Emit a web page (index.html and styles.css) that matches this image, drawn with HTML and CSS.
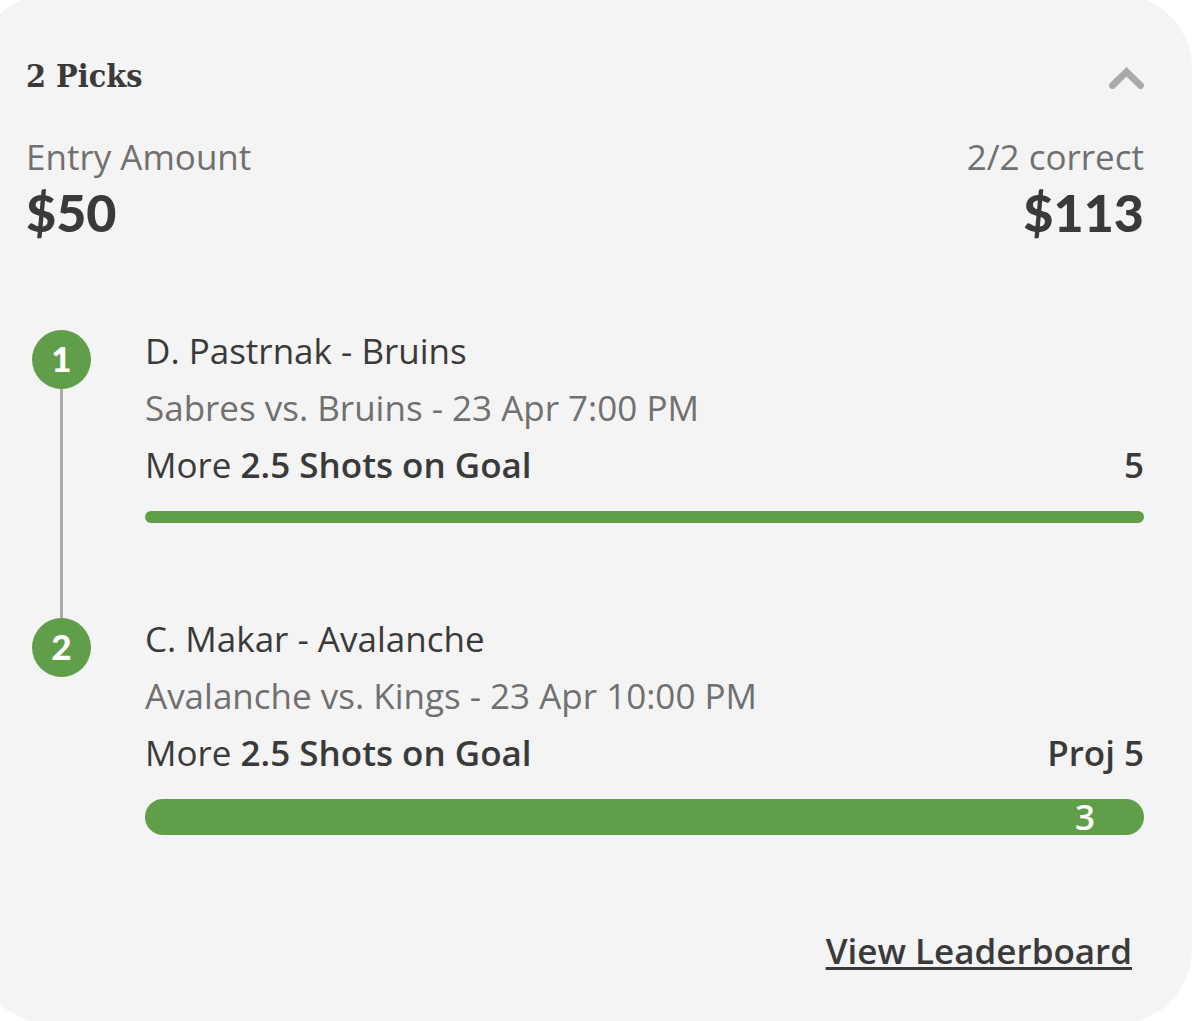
FILE: index.html
```
<!DOCTYPE html>
<html lang="en">
<head>
    <meta charset="UTF-8">
    <meta name="viewport" content="width=device-width, initial-scale=1">
    <title>2 Picks</title>
    <link rel="stylesheet" href="styles.css">
</head>
<body>
<div class="card">
    <div class="header">
        <h1>2 Picks</h1>
        <button class="toggle" type="button" aria-label="Hide picks" aria-expanded="true">
            <svg width="35" height="24" viewBox="0 0 35 24">
                <path d="M3.5 20.5L17.5 6.8L31.5 20.5" fill="none" stroke="#a9a9a9" stroke-width="6.8" stroke-linecap="round"/>
            </svg>
        </button>
    </div>

    <div class="summary">
        <div>
            <p class="label">Entry Amount</p>
            <p class="amount">$50</p>
        </div>
        <div class="right">
            <p class="label">2/2 correct</p>
            <p class="amount">$113</p>
        </div>
    </div>

    <ol class="picks">
        <li class="pick">
            <div class="marker">
                <span class="number">1</span>
                <span class="line"></span>
            </div>
            <div class="info">
                <p>D. Pastrnak - Bruins</p>
                <p class="game">Sabres vs. Bruins - 23 Apr 7:00 PM</p>
                <div class="stat">
                    <p>More <b>2.5 Shots on Goal</b></p>
                    <b>5</b>
                </div>
                <div class="bar"></div>
            </div>
        </li>
        <li class="pick">
            <div class="marker">
                <span class="number">2</span>
            </div>
            <div class="info">
                <p>C. Makar - Avalanche</p>
                <p class="game">Avalanche vs. Kings - 23 Apr 10:00 PM</p>
                <div class="stat">
                    <p>More <b>2.5 Shots on Goal</b></p>
                    <b>Proj 5</b>
                </div>
                <div class="bar live">3</div>
            </div>
        </li>
    </ol>

    <div class="footer">
        <a href="#">View Leaderboard</a>
    </div>
</div>
</body>
</html>
```
FILE: styles.css
```
*{
    margin: 0;
    padding: 0;
    box-sizing: border-box;
}

body{
    background-color: #ffffff;
    color: #3a3a3a;
    font-family: "Open Sans", "Noto Sans", sans-serif;
    font-size: 35px;
    line-height: 57px;
    overflow: hidden;
}

/* the card runs past the top, left and bottom of the window */
.card{
    margin: -6px 8px -3px -24px;
    padding: 54px 48px 45px 50px;
    border-radius: 75px;
    background-color: #f4f4f4;
}

.header{
    display: flex;
    justify-content: space-between;
    align-items: center;
}

h1{
    font-family: "DejaVu Serif Condensed", "DejaVu Serif", serif;
    font-size: 32px;
    font-weight: bold;
}

.toggle{
    border: none;
    background: none;
    cursor: pointer;
}

.toggle svg{
    display: block;
}

.summary{
    display: flex;
    justify-content: space-between;
    margin-top: 28px;
}

.right{
    text-align: right;
}

.label{
    color: #707070;
    line-height: 48px;
}

.amount{
    font-family: Lato, sans-serif;
    font-size: 52px;
    font-weight: 900;
    line-height: 62px;
}

.picks{
    margin-top: 79px;
    list-style: none;
}

.pick{
    display: flex;
    gap: 54px;
}

.marker{
    display: flex;
    flex-direction: column;
    align-items: center;
    padding: 8px 0 0 6px;
}

.number{
    width: 59px;
    height: 59px;
    border-radius: 50%;
    background-color: #619e49;
    color: #ffffff;
    font-family: Lato, sans-serif;
    font-size: 35px;
    font-weight: 900;
    text-align: center;
}

/* reaches down to the next number */
.line{
    flex: 1;
    width: 3px;
    margin-bottom: -8px;
    background-color: #aaaaaa;
}

.info{
    flex: 1;
    padding-bottom: 87px;
}

.game{
    color: #707070;
}

.stat{
    display: flex;
    justify-content: space-between;
}

b{
    font-weight: 600;
}

.bar{
    height: 12px;
    margin-top: 18px;
    border-radius: 6px;
    background-color: #619e49;
}

.live{
    height: 36px;
    padding-right: 49px;
    border-radius: 18px;
    color: #ffffff;
    font-weight: 600;
    line-height: 36px;
    text-align: right;
}

.footer{
    padding-right: 12px;
    text-align: right;
}

.footer a{
    color: #3a3a3a;
    font-weight: 600;
    text-decoration-thickness: 3px;
    text-underline-offset: 3px;
}
```
